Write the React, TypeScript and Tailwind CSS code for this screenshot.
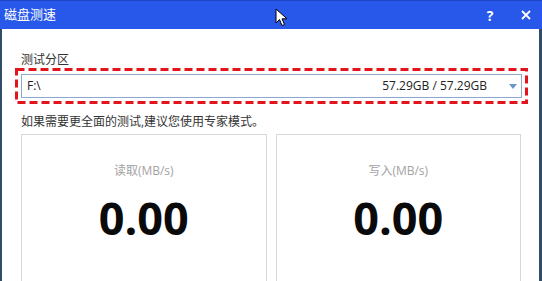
import React from 'react';

const font = { fontFamily: '"Open Sans", "Noto Sans CJK SC", sans-serif' };

function Cursor() {
  return (
    <svg className="absolute left-[275px] top-[8px]" width="13" height="19" viewBox="0 0 13 19">
      <path d="M1 1 L1 15 L4.5 11.5 L7 17.5 L9.5 16.5 L7 10.8 L12 10.8 Z" fill="#fff" stroke="#000" strokeWidth="1" strokeLinejoin="round" />
    </svg>
  );
}

function SpeedCard({ label }: { label: string }) {
  return (
    <div className="flex-1 h-[170px] border border-[#d8d8d8] bg-white flex flex-col items-center">
      <div className="mt-[28px] text-[12px] leading-[16px] text-[#a3a3a3]">{label}</div>
      <div className="mt-[14px] text-[45px] leading-[50px] font-bold text-[#0a0a0a]">0.00</div>
    </div>
  );
}

export default function App() {
  return (
    <div className="relative w-[542px] h-[281px] overflow-hidden bg-white flex flex-col" style={font}>
      <div className="h-[29px] bg-[#2858ea] border-t border-[#1f44c4] flex items-center px-[4px] text-white text-[13px] shrink-0">
        <span className="flex-1">磁盘测速</span>
        <span className="w-[20px] text-center font-bold text-[14px]">?</span>
        <span className="w-[21px]" />
        <svg width="10" height="10" viewBox="0 0 10 10" className="mr-[7px]">
          <path d="M1 1 L9 9 M9 1 L1 9" stroke="#fff" strokeWidth="1.8" />
        </svg>
      </div>
      <Cursor />
      <div className="flex-1 border-l-[2px] border-r-[3px] border-[#2f4d6b] pl-[13px] pr-[11px] pt-[23px]">
        <div className="ml-[6px] text-[12px] leading-[16px] text-[#333]">测试分区</div>
        <div className="relative p-[6px]">
          {/* red dashed highlight drawn over the select */}
          <svg className="absolute inset-0 w-full h-full pointer-events-none" preserveAspectRatio="none">
            <rect x="1.5" y="1.5" width="510" height="33" fill="none" stroke="#e3151c" strokeWidth="3" strokeDasharray="8 4" />
          </svg>
          <div className="h-[24px] border border-[#8ea8c9] flex items-center pl-[5px] pr-[4px] text-[12px] text-[#222]">
            <span className="flex-1">F:\</span>
            <span>57.29GB / 57.29GB</span>
            <svg width="8" height="5" viewBox="0 0 8 5" className="ml-[22px]">
              <path d="M0 0 L8 0 L4 5 Z" fill="#6b95cc" />
            </svg>
          </div>
        </div>
        <div className="mt-[10px] ml-[6px] text-[12px] leading-[16px] text-[#333]">
          如果需要更全面的测试,建议您使用专家模式。
        </div>
        <div className="mt-[4px] ml-[6px] mr-[7px] flex gap-[9px]">
          <SpeedCard label="读取(MB/s)" />
          <SpeedCard label="写入(MB/s)" />
        </div>
      </div>
    </div>
  );
}
